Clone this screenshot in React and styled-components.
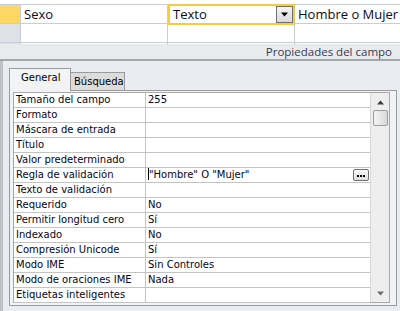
import React from 'react';
import styled, { createGlobalStyle } from 'styled-components';

const Global = createGlobalStyle`
  html, body { margin: 0; padding: 0; background: #e9ecf0; }
  * { box-sizing: border-box; }
`;

const Screen = styled.div`
  width: 400px;
  height: 311px;
  overflow: hidden;
  background: #e9ecf0;
  display: flex;
  flex-direction: column;
`;

const FieldGrid = styled.div`
  background: #fff;
  padding-top: 4px;
  flex: none;
`;

const GridRow = styled.div`
  display: flex;
  height: ${p => (p.partial ? 3 : 19)}px;
  border-top: 1px solid #c9ced6;
`;

const Selector = styled.div`
  width: 21px;
  flex: none;
  background: ${p => (p.active ? '#fcd764' : '#dee1e7')};
  border-right: 1px solid #c9ced6;
`;

const Cell = styled.div`
  width: ${p => p.w}px;
  flex: none;
  position: relative;
  border-right: 1px solid #c9ced6;
  font-family: "Open Sans", "Noto Sans", sans-serif;
  font-size: 13px;
  line-height: 18px;
  color: #0b0b20;
  padding-left: ${p => p.pad || 3}px;
  white-space: nowrap;
  overflow: hidden;
  ${p => p.focused && `
    margin-top: -1px;
    height: 21px;
    border: 2px solid #f5c94a;
    line-height: 17px;
    padding-left: 3px;
  `}
`;

const LastCell = styled(Cell)`
  flex: 1;
  border-right: none;
`;

const DropButton = styled.div`
  position: absolute;
  right: 0px;
  top: 0px;
  width: 17px;
  height: 17px;
  border: 1px solid #6f6f6f;
  background: linear-gradient(#f4f4f4, #d9d9d9);
  display: flex;
  align-items: center;
  justify-content: center;
`;

const SectionBar = styled.div`
  height: 17px;
  flex: none;
  margin-top: -1px;
  background: #e8eaee;
  border-bottom: 2px solid #a4a6aa;
  display: flex;
  justify-content: flex-end;
  align-items: center;
  padding-right: 8px;
  font-family: "Open Sans", "Noto Sans", sans-serif;
  font-size: 11.5px;
  color: #3a3a4e;
`;

const Panel = styled.div`
  flex: 1;
  display: flex;
  flex-direction: column;
  border-left: 3px solid #bfc3c9;
  padding: 7px 3px 0 6px;
`;

const TabStrip = styled.div`
  display: flex;
  align-items: flex-end;
  height: 22px;
  flex: none;
`;

const Tab = styled.div`
  font-family: "DejaVu Sans", Verdana, sans-serif;
  font-size: 10px;
  color: #000;
  border: 1px solid #9a9a9a;
  border-bottom: none;
  ${p => p.selected ? `
    height: 23px;
    margin-bottom: -1px;
    width: 62px;
    padding-left: 11px;
    padding-top: 3px;
    background: #f2f3f5;
    position: relative;
    z-index: 1;
  ` : `
    height: 18px;
    width: 54px;
    padding-left: 3px;
    padding-top: 3px;
    border-left: none;
    background: #dcdcdc;
  `}
`;

const TabPage = styled.div`
  width: 388px;
  height: 216px;
  border: 1px solid #9a9a9a;
  background: #f2f3f5;
  padding: 1px 6px 0 3px;
`;

const PropBox = styled.div`
  display: flex;
  border: 1px solid #a8a8a8;
  background: #fff;
  height: 211px;
`;

const PropList = styled.div`
  flex: 1;
  display: flex;
  flex-direction: column;
`;

const PropRow = styled.div`
  display: flex;
  height: 15px;
  flex: none;
  border-bottom: 1px solid #c4c4c4;
  font-family: "DejaVu Sans", Verdana, sans-serif;
  font-size: 10px;
  line-height: 14px;
  color: #05051a;
`;

const PropName = styled.div`
  width: 132px;
  flex: none;
  border-right: 1px solid #c4c4c4;
  padding-left: 2px;
  white-space: nowrap;
  overflow: hidden;
`;

const PropValue = styled.div`
  flex: 1;
  padding-left: 2px;
  position: relative;
  white-space: nowrap;
`;

const Caret = styled.span`
  display: inline-block;
  width: 1px;
  height: 12px;
  background: #000;
  vertical-align: -2px;
  margin-right: 0px;
`;

const BuildButton = styled.div`
  position: absolute;
  right: 1px;
  top: 1px;
  width: 16px;
  height: 12px;
  border: 1px solid #707070;
  border-radius: 2px;
  background: linear-gradient(#fafafa, #dedede);
  display: flex;
  align-items: center;
  justify-content: center;
  gap: 1px;
  padding-top: 2px;
`;

const Dot = styled.span`
  width: 2px;
  height: 2px;
  background: #000;
`;

const ScrollBar = styled.div`
  width: 19px;
  flex: none;
  background: #eeeeee;
  border-left: 1px solid #d8d8d8;
  display: flex;
  flex-direction: column;
  align-items: center;
  padding: 7px 0 6px;
`;

const Thumb = styled.div`
  width: 15px;
  height: 16px;
  margin-top: 5px;
  border: 1px solid #9c9c9c;
  border-radius: 2px;
  background: linear-gradient(90deg, #f4f4f4, #d8d8d8);
`;

const Spacer = styled.div`
  flex: 1;
`;

const props = [
  ['Tamaño del campo', '255'],
  ['Formato', ''],
  ['Máscara de entrada', ''],
  ['Título', ''],
  ['Valor predeterminado', ''],
  ['Regla de validación', 'rule'],
  ['Texto de validación', ''],
  ['Requerido', 'No'],
  ['Permitir longitud cero', 'Sí'],
  ['Indexado', 'No'],
  ['Compresión Unicode', 'Sí'],
  ['Modo IME', 'Sin Controles'],
  ['Modo de oraciones IME', 'Nada'],
  ['Etiquetas inteligentes', ''],
];

const Arrow = ({ up, size = 7, color = '#000' }) => (
  <svg width={size} height={Math.ceil(size / 2) + 1} viewBox="0 0 7 4">
    <path d={up ? 'M0 4 L3.5 0 L7 4 Z' : 'M0 0 L7 0 L3.5 4 Z'} fill={color} />
  </svg>
);

export default function App() {
  return (
    <Screen>
      <Global />
      <FieldGrid>
        <GridRow>
          <Selector active />
          <Cell w={147}>Sexo</Cell>
          <Cell w={127} focused>
            Texto
            <DropButton><Arrow size={7} /></DropButton>
          </Cell>
          <LastCell>Hombre o Mujer</LastCell>
        </GridRow>
        <GridRow>
          <Selector />
          <Cell w={147} />
          <Cell w={127} />
          <LastCell />
        </GridRow>
        <GridRow partial>
          <Selector />
          <Cell w={147} />
          <Cell w={127} />
          <LastCell />
        </GridRow>
      </FieldGrid>
      <SectionBar>Propiedades del campo</SectionBar>
      <Panel>
        <TabStrip>
          <Tab selected>General</Tab>
          <Tab>Búsqueda</Tab>
        </TabStrip>
        <TabPage>
          <PropBox>
            <PropList>
              {props.map(([name, value]) => (
                <PropRow key={name}>
                  <PropName>{name}</PropName>
                  <PropValue>
                    {value === 'rule' ? (
                      <>
                        <Caret />"Hombre" O "Mujer"
                        <BuildButton><Dot /><Dot /><Dot /></BuildButton>
                      </>
                    ) : value}
                  </PropValue>
                </PropRow>
              ))}
            </PropList>
            <ScrollBar>
              <Arrow up size={7} color="#3c3c3c" />
              <Thumb />
              <Spacer />
              <Arrow size={7} color="#6c6c6c" />
            </ScrollBar>
          </PropBox>
        </TabPage>
      </Panel>
    </Screen>
  );
}
